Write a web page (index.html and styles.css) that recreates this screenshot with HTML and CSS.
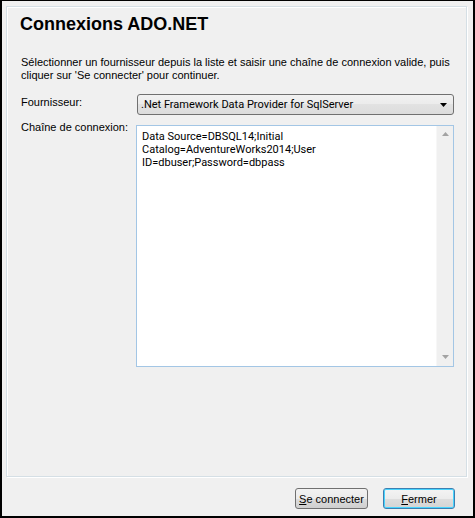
FILE: index.html
```html
<!DOCTYPE html>
<html lang="fr">
<head>
<meta charset="utf-8">
<title>Connexions ADO.NET</title>
<link rel="stylesheet" href="styles.css">
</head>
<body>
<div class="window">
  <div class="panel">
    <h1 class="title">Connexions ADO.NET</h1>
    <p class="desc">Sélectionner un fournisseur depuis la liste et saisir une chaîne de connexion valide, puis<br>cliquer sur 'Se connecter' pour continuer.</p>
    <div class="row row-provider">
      <span class="label label-provider">Fournisseur:</span>
      <div class="combo">
        <span class="combo-text">.Net Framework Data Provider for SqlServer</span>
        <svg class="combo-arrow" width="7" height="4" viewBox="0 0 7 4"><path d="M0 0H7L3.5 4Z" fill="#000"/></svg>
      </div>
    </div>
    <div class="row row-conn">
      <span class="label label-conn">Chaîne de connexion:</span>
      <div class="textbox">
        <div class="tb-text">Data Source=DBSQL14;Initial<br>Catalog=AdventureWorks2014;User<br>ID=dbuser;Password=dbpass</div>
        <div class="scrollbar">
          <svg class="sb-arrow" width="7" height="4" viewBox="0 0 7 4"><path d="M3.5 0L7 4H0Z" fill="#a3a3a3"/></svg>
          <svg class="sb-arrow" width="7" height="4" viewBox="0 0 7 4"><path d="M0 0H7L3.5 4Z" fill="#a3a3a3"/></svg>
        </div>
      </div>
    </div>
  </div>
  <div class="footer">
    <button class="btn"><u>S</u>e connecter</button>
    <button class="btn btn-default"><u>F</u>ermer</button>
  </div>
</div>
</body>
</html>
```
FILE: styles.css
```css
html, body {
  margin: 0;
  padding: 0;
  background: #f0f0f0;
}

.window {
  width: 475px;
  height: 518px;
  box-sizing: border-box;
  border: 2px solid #000;
  border-top-width: 1px;
  background: #f0f0f0;
  padding: 5px 6px 0 4px;
  display: flex;
  flex-direction: column;
  font-family: "Liberation Sans", Arial, sans-serif;
  font-size: 11px;
  color: #000;
}

.panel {
  height: 471px;
  box-sizing: border-box;
  border: 1px solid #d5dfe5;
  box-shadow: 1px 1px 0 #fff, inset 1px 1px 0 #fff;
  padding: 6px 12px 0 13px;
  display: flex;
  flex-direction: column;
}

.title {
  margin: 0;
  font-size: 18px;
  line-height: 22px;
  font-weight: bold;
  color: #000;
}

.desc {
  margin: 21px 0 0 1px;
  font-size: 11px;
  line-height: 13px;
}

.row {
  display: flex;
  align-items: flex-start;
}

.label {
  width: 115px;
  flex: none;
  font-size: 11px;
  line-height: 13px;
  padding-left: 1px;
}

.row-provider {
  margin-top: 12px;
}

.label-provider {
  margin-top: 2px;
}

.combo {
  margin-left: 1px;
  width: 317px;
  height: 21px;
  box-sizing: border-box;
  border: 1px solid #707070;
  border-radius: 3px;
  background: linear-gradient(#f2f2f2, #ebebeb 50%, #e2e2e2 50%, #dcdcdc);
  display: flex;
  align-items: center;
  justify-content: space-between;
  padding: 0 6px 0 3px;
}

.combo-text {
  font-family: Roboto, "Liberation Sans", sans-serif;
  font-size: 11px;
  line-height: 14px;
}

.row-conn {
  margin-top: 10px;
}

.label-conn {
  margin-top: -4px;
}

.textbox {
  width: 318px;
  height: 242px;
  box-sizing: border-box;
  border: 1px solid #a3c6e5;
  background: #fff;
  display: flex;
  justify-content: space-between;
}

.tb-text {
  padding: 4px 0 0 5px;
  font-family: Roboto, "Liberation Sans", sans-serif;
  font-size: 11px;
  line-height: 13px;
}

.scrollbar {
  width: 17px;
  flex: none;
  background: #f0f0f0;
  border-left: 1px solid #f7f7f7;
  box-sizing: border-box;
  display: flex;
  flex-direction: column;
  justify-content: space-between;
  align-items: center;
  padding: 6px 0 7px;
}

.footer {
  display: flex;
  justify-content: flex-end;
  gap: 15px;
  padding: 11px 12px 0 0;
}

.btn {
  height: 21px;
  box-sizing: border-box;
  border: 1px solid #707070;
  border-radius: 3px;
  background: linear-gradient(#f2f2f2, #ebebeb 50%, #dddddd 50%, #cfcfcf);
  font-family: "Liberation Sans", Arial, sans-serif;
  font-size: 11px;
  color: #000;
  padding: 0;
  width: 73px;
}

.btn-default {
  width: 72px;
  border-color: #3c7fb1;
  box-shadow: inset 0 0 0 1px #48d4fe;
  background: linear-gradient(#f4f4f4, #ececec 50%, #dedede 50%, #d4d4d4);
}
```
